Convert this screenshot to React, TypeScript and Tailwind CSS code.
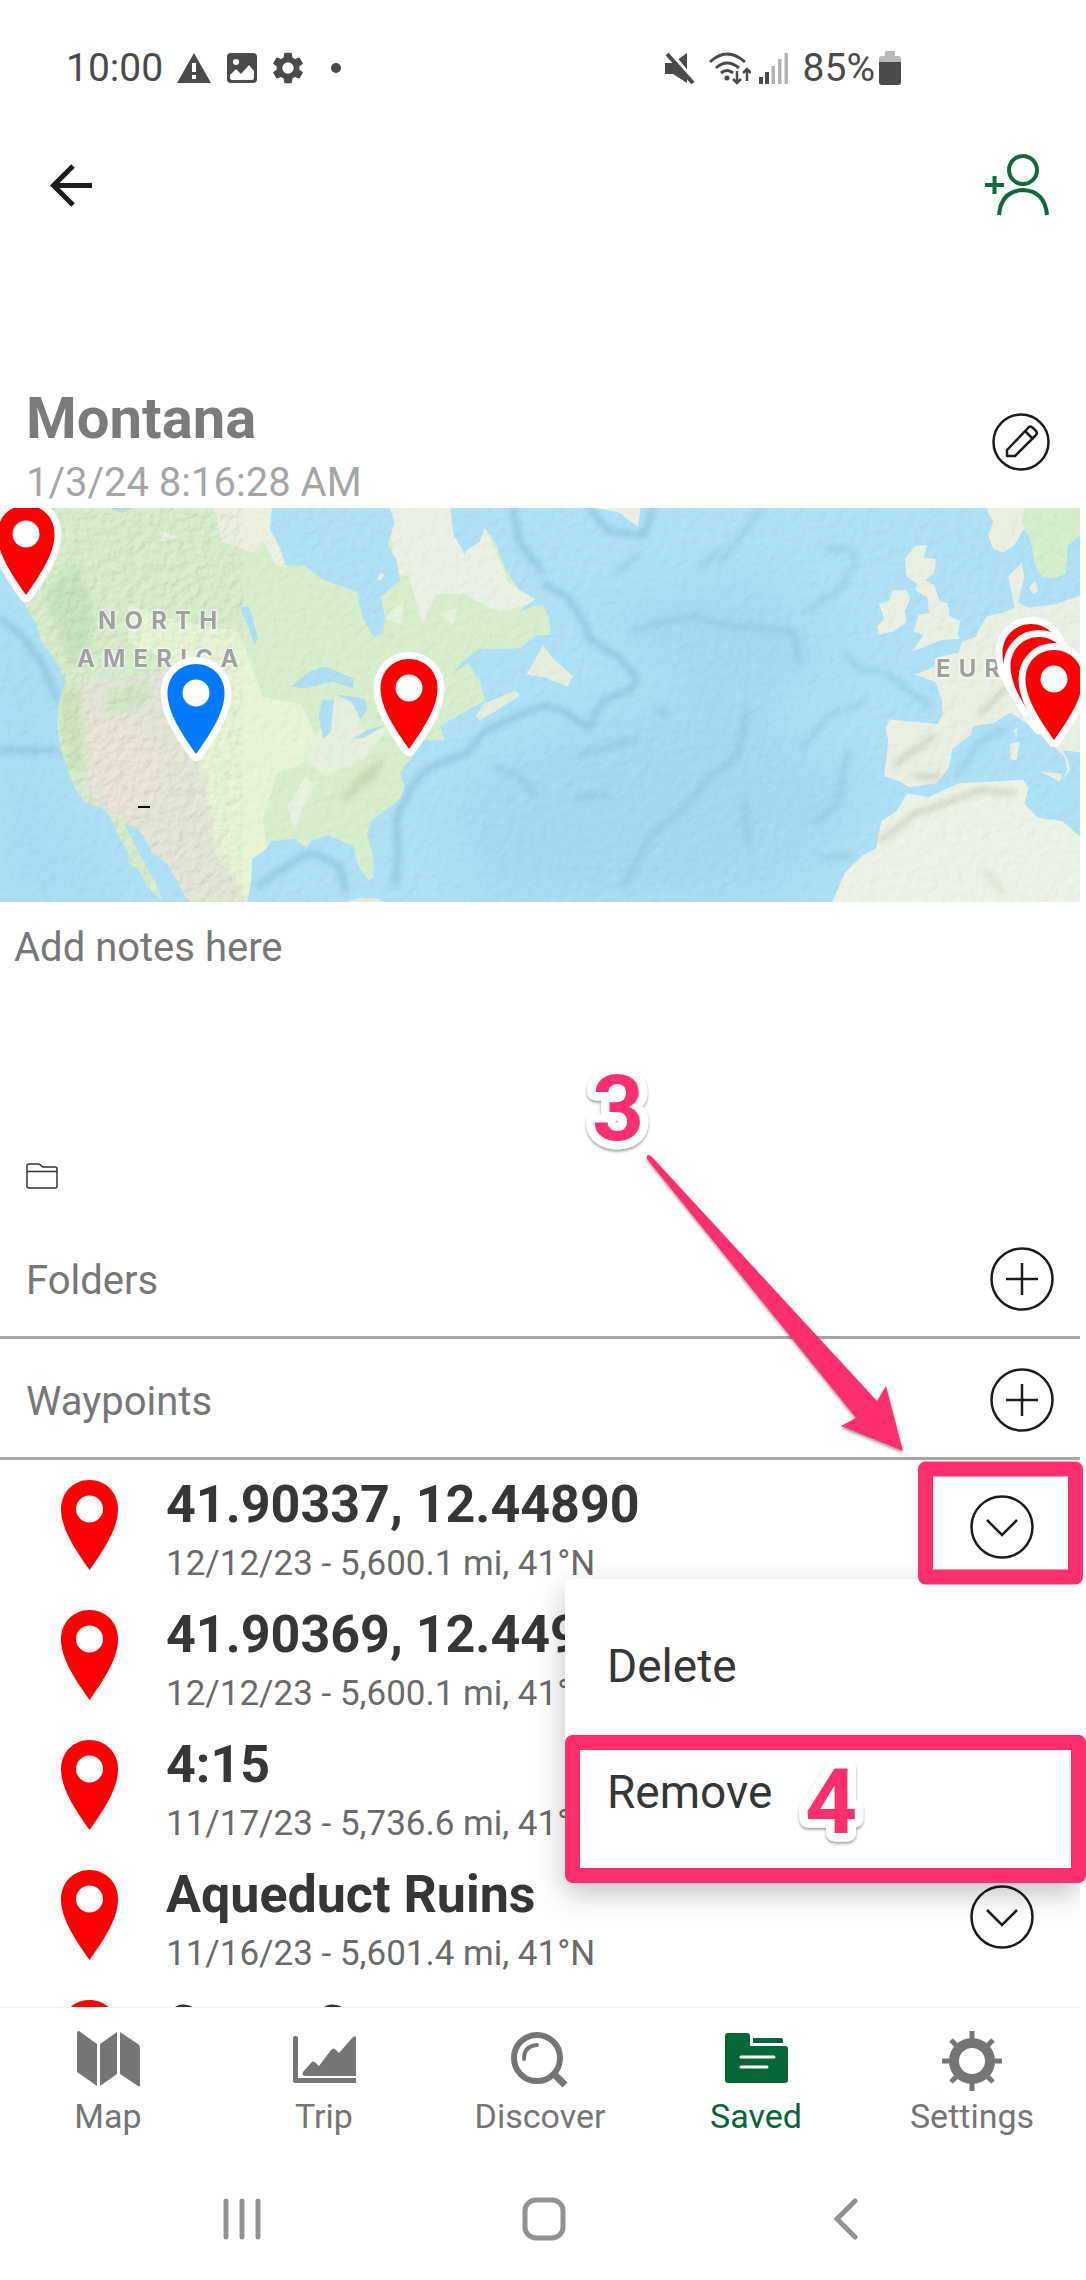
import { useState } from 'react'
import type { ReactNode } from 'react'

interface Waypoint {
  name: string
  detail: string
}

interface MapPin {
  x: number
  y: number
  color: string
}

const waypoints: Waypoint[] = [
  { name: '41.90337, 12.44890', detail: '12/12/23 - 5,600.1 mi, 41°N' },
  { name: '41.90369, 12.44921', detail: '12/12/23 - 5,600.1 mi, 41°N' },
  { name: '4:15', detail: '11/17/23 - 5,736.6 mi, 41°N' },
  { name: 'Aqueduct Ruins', detail: '11/16/23 - 5,601.4 mi, 41°N' },
  { name: 'Camp C', detail: '' },
]

// x and y are the tip of the pin on a 1080 x 394 map
const mapPins: MapPin[] = [
  { x: 26, y: 87, color: '#ff0000' },
  { x: 196, y: 246, color: '#007aff' },
  { x: 409, y: 241, color: '#ff0000' },
  { x: 1031, y: 206, color: '#ff0000' },
  { x: 1039, y: 219, color: '#ff0000' },
  { x: 1054, y: 232, color: '#ff0000' },
]

const PIN_PATH = 'M28.500 0C12.500 0 0 12.500 0 29c0 17 10 35 28.500 61C47 64 57 46 57 29 57 12.500 44.500 0 28.500 0Z'

function Pin({ color = '#ff0000', halo = false }: { color?: string; halo?: boolean }) {
  return (
    <svg viewBox="0 0 57 90" className="h-[90px] w-[57px] shrink-0 overflow-visible" aria-hidden="true">
      {halo && <path d={PIN_PATH} fill="#fff" stroke="#fff" strokeWidth="14" strokeLinejoin="round" />}
      <path d={PIN_PATH} fill={color} />
      <circle cx="28.5" cy="29" r="13.5" fill="#fff" />
    </svg>
  )
}

function StatusBar() {
  return (
    <div className="flex h-[136px] shrink-0 items-center pl-[66px] text-[39px] text-[#4a4a4a]">
      <span>10:00</span>
      <svg viewBox="0 0 34 30" className="ml-3.5 h-[30px] w-[34px]">
        <path d="M17 0 34 30H0Z" fill="#4a4a4a" />
        <path d="M15 10h4v9h-4zM15 22h4v4h-4z" fill="#fff" />
      </svg>
      <svg viewBox="0 0 30 30" className="ml-4 h-[30px] w-[30px]">
        <rect width="30" height="30" rx="4" fill="#4a4a4a" />
        <circle cx="9" cy="9" r="3" fill="#fff" />
        <path d="M3 22 9 16l5 5 8-9 5 6v7q0 2-2 2H5q-2 0-2-2Z" fill="#fff" />
      </svg>
      <svg viewBox="0 0 24 24" className="ml-3 h-[38px] w-[38px]" fill="#4a4a4a">
        <path d="M19.140 12.940c.040-.3.060-.61.060-.94s-.02-.64-.07-.94l2.030-1.580a.49.49 0 0 0 .12-.61l-1.920-3.320a.49.49 0 0 0-.59-.22l-2.390.960a7 7 0 0 0-1.620-.94l-.36-2.540a.48.48 0 0 0-.48-.41h-3.840a.48.48 0 0 0-.47.41l-.36 2.540a7 7 0 0 0-1.620.940l-2.390-.96a.48.48 0 0 0-.59.22L2.740 8.870a.48.48 0 0 0 .12.61l2.030 1.580a6 6 0 0 0 0 1.880l-2.030 1.580a.49.49 0 0 0-.12.61l1.920 3.320c.12.220.370.290.590.220l2.390-.96c.5.380 1.030.7 1.620.940l.36 2.540c.05.240.240.410.480.410h3.840c.24 0 .44-.17.47-.41l.36-2.540a7 7 0 0 0 1.620-.94l2.390.960c.22.080.470 0 .59-.22l1.920-3.320a.48.48 0 0 0-.12-.61ZM12 15.600a3.600 3.600 0 1 1 0-7.200 3.600 3.600 0 0 1 0 7.200Z" />
      </svg>
      <span className="ml-6 h-[10px] w-[10px] rounded-full bg-[#4a4a4a]" />
      <svg viewBox="0 0 30 32" className="ml-auto h-8 w-[30px]">
        <path d="M0 11h8L22 1v30L8 22H0Z" fill="#4a4a4a" />
        <path d="M5 0 30 30" stroke="#fff" strokeWidth="4" />
        <path d="M2 2 28 31" stroke="#4a4a4a" strokeWidth="4" />
      </svg>
      <svg viewBox="0 0 42 34" className="ml-3.5 h-[34px] w-[42px]" fill="none" stroke="#4a4a4a" strokeWidth="3">
        <path d="M1 11Q18-5 36 11M7 17Q18 7 30 17M12 22q6-5 12 0" />
        <circle cx="18" cy="27" r="2.500" fill="#4a4a4a" stroke="none" />
        <path d="M28 20v12m-4-4 4 4 4-4M38 30V18m-4 4 4-4 4 4" strokeWidth="2.500" />
      </svg>
      <svg viewBox="0 0 30 32" className="ml-2 h-8 w-[30px]">
        <path d="M0 25h4v7H0zM6 20h4v12H6z" fill="#4a4a4a" />
        <path d="M12.500 14h3.500v18h-3.500zM19 7h3.500v25H19zM25.500 1H29v31h-3.500z" fill="#b3b3b3" />
      </svg>
      <span className="ml-[14px]">85%</span>
      <svg viewBox="0 0 22 34" className="mr-[179px] ml-1 h-[34px] w-[22px]">
        <path d="M6 0h10v5h3q3 0 3 3v5H0V8q0-3 3-3h3Z" fill="#b9b9b9" />
        <path d="M0 11h22v20q0 3-3 3H3q-3 0-3-3Z" fill="#4a4a4a" />
      </svg>
    </div>
  )
}

function OverviewMap() {
  return (
    <div className="relative h-[394px] shrink-0 overflow-hidden bg-[#b0e2f8]">
      <svg viewBox="0 401 3119 1144" preserveAspectRatio="none" className="h-full w-full" aria-hidden="true">
        <defs>
          <filter id="relief" x="0" y="0" width="100%" height="100%">
            <feTurbulence type="fractalNoise" baseFrequency="0.04" numOctaves="5" seed="8" />
            <feDiffuseLighting surfaceScale="6" lightingColor="#fff">
              <feDistantLight azimuth="225" elevation="60" />
            </feDiffuseLighting>
          </filter>
          <filter id="soft">
            <feGaussianBlur stdDeviation="9" />
          </filter>
          <filter id="softer">
            <feGaussianBlur stdDeviation="60" />
          </filter>
          <path
            id="america"
            d="M0 401 0 520 50 620 75 690 105 740 120 790 165 850 190 905 172 960 165 1020 172 1090 190 1140 200 1175 215 1215 245 1255 295 1272 320 1300 340 1350 375 1410 365 1430 400 1450 425 1500 470 1545 450 1490 410 1420 375 1350 358 1318 385 1322 415 1355 440 1400 480 1430 510 1480 535 1530 550 1545H715L725 1480 727 1420 770 1390 785 1368 850 1362 885 1388 900 1365 950 1352 990 1370 1020 1380 1035 1440 1062 1480 1078 1475 1080 1420 1060 1350 1070 1310 1110 1280 1155 1245 1168 1210 1155 1170 1185 1130 1225 1075 1285 1075 1270 1035 1330 1000 1400 960 1385 900 1350 850 1300 890 1290 910 1330 850 1380 812 1500 808 1550 770 1590 770 1585 720 1568 680 1500 700 1545 665 1500 640 1460 580 1430 500 1400 460 1385 500 1340 530 1310 480 1300 401H1125L1140 440 1120 510 1145 550 1155 610 1100 660 1112 720 1105 765 1078 775 1045 715 1032 645 930 608 880 568 825 568 805 510 778 460 785 401Z"
          />
          <path
            id="europe"
            d="M3119 655 3050 680 2970 690 2940 675 2958 600 2950 560 2912 600 2930 690 2898 705 2850 715 2828 750 2818 775 2778 790 2768 820 2700 838 2698 862 2643 885 2700 905 2720 955 2722 1000 2708 1028 2570 1015 2558 1040 2565 1080 2553 1180 2600 1195 2625 1212 2705 1200 2740 1155 2750 1100 2803 1060 2810 1035 2870 1025 2918 995 2970 1030 3040 1090 3075 1125 3083 1160 3070 1190 3090 1160 3083 1130 3070 1105 3119 1110Z"
          />
          <path
            id="africa"
            d="M2403 1545 2440 1460 2490 1410 2530 1390 2545 1310 2590 1280 2620 1230 2680 1240 2770 1200 2870 1195 2955 1190 2970 1215 2958 1260 2998 1300 3068 1310 3119 1355V1545Z"
          />
          <clipPath id="land">
            <use href="#america" />
            <use href="#europe" />
            <use href="#africa" />
          </clipPath>
        </defs>

        {/* Sea floor */}
        <g filter="url(#softer)" fill="#98d1ec" opacity="0.45">
          <path d="M1300 1250 1600 1050 2150 900 2300 1100 2500 1200 2380 1400 2200 1545H1400Z" />
          <path d="M0 720 120 900 130 1200 330 1545H0Z" opacity="0.7" />
          <path d="M1750 700 2200 600 2400 850 2200 980 1900 880Z" />
        </g>
        <g fill="none" stroke="#78acc9" strokeWidth="9" strokeLinejoin="round" filter="url(#soft)" opacity="0.85">
          <path d="M1140 1500 1150 1400 1145 1300 1190 1210 1230 1160 1350 1110 1400 1050 1480 1010 1568 975 1620 985 1700 1040 1740 960 1830 920 1838 890 1780 830 1700 780 1690 740 1640 660 1568 620" />
          <path d="M740 1500 860 1420 900 1400 980 1440 1000 1520" />
          <path d="M0 720 70 780 130 870 165 960M0 1105H165" />
          <path d="M1480 401 1500 500 1568 590" />
          <path d="M1700 401 1760 470 1860 480 1885 401" />
        </g>
        <g fill="none" stroke="#7db2ce" strokeWidth="7" strokeLinejoin="round" filter="url(#soft)" opacity="0.75">
          <path d="M1820 760 1900 735 2010 715 2080 740 2200 750 2290 760 2310 860" />
          <path d="M2160 980 2130 1120 2050 1180 1980 1270 1880 1350 1800 1500" />
          <path d="M2330 700 2420 640 2470 560 2460 520 2380 520M2440 820 2480 870 2560 880 2690 980" />
          <path d="M1780 590 1850 530M2080 560 2200 401M2020 580 2080 520" />
          <path d="M2310 1100 2400 1000 2500 960M2450 1100 2420 1260 2350 1320M2150 1240 2160 1380M2370 1420 2460 1410" />
          <path d="M1660 1240 1760 1235M1890 980 1930 1000M1840 1070 1670 1120" />
          <path d="M2760 1180 2830 1080 2900 1040" />
          <path d="M1420 1150 1500 1180 1550 1240" />
        </g>

        {/* North America */}
        <use href="#america" fill="#d8f0cd" />
        <g clipPath="url(#land)">
          <path d="M620 401 640 500 730 530 760 500 800 570 830 570 785 401Z" fill="#edf2e2" />
          <path d="M1120 401H1310L1340 540 1400 455 1470 620 1560 670 1440 705 1340 650 1260 650 1220 740 1180 600 1140 590Z" fill="#ecf2e6" />
          <path d="M370 680 480 720 690 760 760 950 870 970 930 1100 860 1150 800 1170 760 1300 770 1400 710 1545 620 1400 560 1180 650 960 480 840 370 790Z" fill="#eaf6d8" />
          <path d="M960 960 1010 950 1060 1060 1130 1030 1050 1130 940 1180 880 1130Z" fill="#e6f1de" />
          <path d="M880 1180 910 1200 850 1330 830 1270ZM1110 720 1165 670 1160 740ZM1270 710 1320 690 1310 740ZM460 500 475 470 520 485Z" fill="#e8f3e0" />
          <g filter="url(#soft)">
            <path d="M130 640 230 560 270 700 260 860 200 860Z" fill="#cbe6c1" />
            <path d="M230 900 480 880 590 1180 620 1400 720 1545H540L370 1320 250 1240Z" fill="#e6e8d9" />
            <path d="M250 1020 380 1020 480 1130 460 1240 330 1300 260 1150Z" fill="#ece7d9" />
            <path d="M170 920H230L240 1160 200 1170Z" fill="#cfe8be" />
            <path d="M330 930 430 900 420 980 300 1000Z" fill="#d3e9c5" />
            <path d="M980 1240 1080 1140 1110 1130 1090 1180 1000 1250Z" fill="#c4ddb6" />
          </g>
        </g>
        <g fill="#b0e0f5">
          <path d="M840 920 895 875 940 862 1020 895 1020 925 960 905 880 925ZM930 960 965 958 955 1050 935 1072 920 1010ZM970 942 1055 955 1060 985 1040 1015 1030 990 1015 965ZM1018 1072 1060 1045 1110 1032 1050 1068ZM1085 1010 1130 990 1120 1010ZM693 690 718 685 745 780 735 798 718 750Z" />
          <path d="M320 401H385L350 415Z" />
        </g>
        <path d="M1520 885 1568 800 1600 840 1655 890 1640 920 1568 892ZM1375 1005 1395 970 1490 930 1500 945 1440 985 1385 1018ZM1000 1545 1040 1532 1090 1535 1110 1545ZM1090 605 1100 588 1110 595 1098 612Z" fill="#e6f0de" />

        {/* Europe and Africa */}
        <g fill="#ebf2e4">
          <use href="#europe" />
          <use href="#africa" fill="#edf5e8" />
          <path d="M2643 510 2678 510 2668 545 2703 550 2698 590 2673 610 2698 625 2713 670 2738 680 2743 715 2773 730 2765 765 2773 780 2718 785 2678 800 2633 818 2668 770 2638 760 2653 710 2683 705 2678 660 2643 640 2648 620 2618 600 2613 550ZM2578 640 2618 640 2628 665 2613 700 2618 735 2578 760 2538 770 2533 745 2553 720 2538 680 2568 670Z" />
          <path d="M2848 401 2868 440 2853 480 2868 520 2898 530 2928 510 2958 460 2978 500 2988 560 3008 600 3048 605 3078 590 3083 510 3119 480V401Z" />
          <path d="M2970 630 2990 612 2998 640 2985 652ZM3003 1165 3068 1172 3060 1195ZM2918 1085 2945 1080 2935 1135 2918 1130ZM2928 1045 2938 1040 2935 1070ZM1718 401H1850L1843 455 1820 440 1790 415Z" />
        </g>
        <path d="M2958 401 2950 440 2978 500 2988 560 3008 600 3048 605 3078 590 3083 510 3119 480V401Z" fill="#d6efcc" />
        <g fill="none" stroke="#c3c4b5" strokeWidth="10" filter="url(#soft)">
          <path d="M2540 1370 2640 1290 2720 1260 2830 1220 2930 1230M2580 1150 2700 1060M2640 1180 2720 1180M2830 1000 2910 920" />
          <path d="M2840 1450 2900 1520" opacity="0.5" />
        </g>

        {/* Hill shading */}
        <rect y="401" width="3119" height="1144" filter="url(#relief)" className="opacity-15 mix-blend-multiply" />
        <g clipPath="url(#land)" className="mix-blend-multiply">
          <path d="M0 401H330L300 760 480 880 560 1100 700 1545H360L160 1200 90 750Z" filter="url(#relief)" opacity="0.2" />
        </g>
      </svg>

      <p className="absolute top-[94px] left-[77px] text-center font-[Inter] text-2xl leading-[38px] font-bold tracking-[0.34em] text-[#a3a0a0] [text-shadow:0_0_3px_#fff,0_0_3px_#fff]">
        NORTH
        <br />
        AMERICA
      </p>
      <p className="absolute top-[142px] left-[936px] font-[Inter] text-2xl leading-[38px] font-bold tracking-[0.34em] text-[#a3a0a0] [text-shadow:0_0_3px_#fff,0_0_3px_#fff]">
        EUROPE
      </p>
      <span className="absolute top-[298px] left-[138px] h-0.5 w-3 bg-black" />

      {mapPins.map((pin, i) => (
        <span
          key={i}
          className="absolute -translate-x-1/2 -translate-y-full"
          style={{ left: `${(pin.x / 1080) * 100}%`, top: pin.y }}
        >
          <Pin color={pin.color} halo />
        </span>
      ))}
    </div>
  )
}

function SectionHeader({ title }: { title: string }) {
  return (
    <div className="flex h-[121px] shrink-0 items-center justify-between border-b-3 border-[#a5a5a5] px-[26px] pt-[3px]">
      <h2 className="pt-1 text-[40px] text-[#777]">{title}</h2>
      <button aria-label={`Add to ${title}`}>
        <svg viewBox="0 0 64 64" className="h-16 w-16" fill="none" stroke="#1c1c1c" strokeWidth="2.500">
          <circle cx="32" cy="32" r="30.500" />
          <path d="M32 16v32M16 32h32" />
        </svg>
      </button>
    </div>
  )
}

function WaypointRow({ waypoint, onToggle }: { waypoint: Waypoint; onToggle: () => void }) {
  return (
    <li className="flex h-[130px] shrink-0 pr-[46px] pl-[61px]">
      <div className="pt-5">
        <Pin />
      </div>
      <div className="ml-12 flex-1 pt-[13px]">
        <h3 className="text-[52px] leading-[64px] font-bold text-[#363636]">{waypoint.name}</h3>
        <p className="mt-2 text-[35px] leading-[38px] text-[#6a6a6a]">{waypoint.detail}</p>
      </div>
      <button onClick={onToggle} aria-label={`Options for ${waypoint.name}`} className="pt-[3px]">
        <svg viewBox="0 0 64 64" className="h-16 w-16" fill="none" stroke="#1c1c1c" strokeWidth="2.500">
          <circle cx="32" cy="32" r="30.500" />
          <path d="m17 25 15 15 15-15" />
        </svg>
      </button>
    </li>
  )
}

const tabs: { label: string; active?: boolean; icon: ReactNode }[] = [
  {
    label: 'Map',
    icon: (
      <path d="M2 0 20 13V55L0 41V2Q0 0 2 0ZM23 13 40 1V43L23 55ZM43 1 61 13Q63 14 63 17V54Q63 56 61 55L43 43Z" />
    ),
  },
  {
    label: 'Trip',
    icon: (
      <>
        <path d="M0 7q0-2 2-2h1q2 0 2 2v40h58v5H2q-2 0-2-2Z" />
        <path d="M10 41 18 32q2-3 5 0l3 3L38 19q2-3 5 0l3 3L60 6q3-2 3 1v38H13q-5 0-3-4Z" />
      </>
    ),
  },
  {
    label: 'Discover',
    icon: (
      <>
        <circle cx="28" cy="27" r="23" fill="none" stroke="currentColor" strokeWidth="6" />
        <path d="M15 28q0-13 13-14" fill="none" stroke="currentColor" strokeWidth="4" strokeLinecap="round" />
        <path d="m43 41 13 13" stroke="currentColor" strokeWidth="7" />
      </>
    ),
  },
  {
    label: 'Saved',
    active: true,
    icon: (
      <>
        <path d="M3 2h19q3 0 3 3v10h35q3 0 3 3v31q0 3-3 3H3q-3 0-3-3V5q0-3 3-3Z" />
        <path d="M28 7h28q2 0 2 2v3H28Z" />
        <path d="M16 26h33M16 36h26" stroke="#fff" strokeWidth="3" strokeLinecap="round" />
      </>
    ),
  },
  {
    label: 'Settings',
    icon: (
      <g fill="none" stroke="currentColor">
        <circle cx="31" cy="30" r="18" strokeWidth="10" />
        <path d="M31 0v12M31 48v12M1 30h12M49 30h12M10 9l8 8M44 43l8 8M10 51l8-8M44 17l8-8" strokeWidth="5" />
      </g>
    ),
  },
]

function TabBar() {
  return (
    <nav className="grid h-[151px] shrink-0 grid-cols-5 border-t border-[#f0f0f0] bg-white">
      {tabs.map((tab) => (
        <a
          key={tab.label}
          href="#"
          className={`flex flex-col items-center pt-[23px] ${tab.active ? 'text-[#056735]' : 'text-[#757575]'}`}
        >
          <svg viewBox="0 0 63 63" className="h-[63px] w-[63px]" fill="currentColor" aria-hidden="true">
            {tab.icon}
          </svg>
          <span className="mt-0.5 text-[34px] leading-10">{tab.label}</span>
        </a>
      ))}
    </nav>
  )
}

function SystemNav() {
  return (
    <div className="grid h-[122px] shrink-0 grid-cols-3 place-items-center bg-white pr-[83px] pl-[91px] text-[#929292]">
      <button aria-label="Recent apps">
        <svg viewBox="0 0 38 42" className="h-[42px] w-[38px]" stroke="currentColor" strokeWidth="5" strokeLinecap="round">
          <path d="M3 3v36M19 3v36M35 3v36" />
        </svg>
      </button>
      <button aria-label="Home">
        <svg viewBox="0 0 44 44" className="h-11 w-11" fill="none" stroke="currentColor" strokeWidth="5">
          <rect x="3" y="3" width="38" height="38" rx="11" />
        </svg>
      </button>
      <button aria-label="Back">
        <svg viewBox="0 0 24 42" className="h-[42px] w-6" fill="none" stroke="currentColor" strokeWidth="5" strokeLinecap="round">
          <path d="M21 3 3 21l18 18" />
        </svg>
      </button>
    </div>
  )
}

// Tutorial callouts drawn on top of the screen
function Callouts() {
  return (
    <svg
      viewBox="0 0 1086 2280"
      className="pointer-events-none absolute top-0 right-0 h-[2280px] w-[1086px] font-[Roboto]"
      fill="#ff2f6e"
    >
      <defs>
        <filter id="drop" x="-50%" y="-50%" width="200%" height="200%">
          <feDropShadow dx="0" dy="2" stdDeviation="1.500" floodOpacity="0.4" />
        </filter>
      </defs>
      <g fill="none" stroke="#ff2f6e" strokeWidth="15" strokeLinejoin="round">
        <rect x="925.500" y="1469" width="150" height="108" />
        <rect x="572.500" y="1742.500" width="506" height="133" />
      </g>
      <path d="M652 1157 877 1401 886 1386 903 1451 841 1426 856 1418 647 1159Q646 1152 652 1157Z" filter="url(#drop)" />
      <g
        fontSize="91"
        fontWeight="700"
        stroke="#fff"
        strokeWidth="17"
        strokeLinejoin="round"
        paintOrder="stroke"
        textAnchor="middle"
        filter="url(#drop)"
      >
        <text x="618" y="1140">3</text>
        <text x="831" y="1833">4</text>
      </g>
    </svg>
  )
}

export default function App() {
  const [menuOpen, setMenuOpen] = useState(true)
  const [notes, setNotes] = useState('')

  return (
    <div className="relative flex h-screen flex-col overflow-hidden bg-white pr-1.5 font-[Roboto,sans-serif]">
      <StatusBar />

      {/* Header */}
      <header className="flex h-[98px] shrink-0 items-center justify-between pr-[31px] pl-[50px]">
        <button aria-label="Back to saved">
          <svg viewBox="0 0 43 43" className="h-[43px] w-[43px]" fill="none" stroke="#1c1c1c" strokeWidth="5">
            <path d="M42 21.500H4M23 2 3.500 21.500 23 41" />
          </svg>
        </button>
        <button aria-label="Share with a person">
          <svg viewBox="0 0 64 62" className="h-[62px] w-16" fill="none" stroke="#0b6b3a" strokeWidth="4">
            <circle cx="38" cy="16" r="14" />
            <path d="M14 61q2-24 24-25 22 1 24 25M0 31h19M9.500 22v18" />
          </svg>
        </button>
      </header>

      {/* Title */}
      <section className="flex shrink-0 items-center justify-between pt-36 pr-[30px] pl-[26px]">
        <div>
          <h1 className="text-[58px] leading-[80px] font-bold text-[#7b7b7b]">Montana</h1>
          <p className="text-[40px] leading-[50px] text-[#a5a5a5]">1/3/24 8:16:28 AM</p>
        </div>
        <button aria-label="Edit name" className="pb-[3px]">
          <svg viewBox="0 0 58 58" className="h-[58px] w-[58px]" fill="none" stroke="#1c1c1c" strokeWidth="2.500">
            <circle cx="29" cy="29" r="27.500" />
            <path d="M15 37 36 15q2-3 5 0l3 3q2 3-1 5L23 43h-8ZM33 18l8 8" strokeLinejoin="round" />
          </svg>
        </button>
      </section>

      <OverviewMap />

      <textarea
        value={notes}
        onChange={(e) => setNotes(e.target.value)}
        placeholder="Add notes here"
        aria-label="Notes"
        className="block h-[232px] w-full shrink-0 resize-none px-3.5 pt-5 text-[40px] leading-[52px] text-[#777] outline-none placeholder:text-[#777]"
      />

      <div className="flex h-[84px] shrink-0 items-center pl-[26px]">
        <svg viewBox="0 0 32 26" className="h-[26px] w-8" fill="none" stroke="#333" strokeWidth="1.500">
          <path d="M1 24V3q0-2 2-2h9q2 0 3 1.500T18 4h11q2 0 2 2v17q0 2-2 2H3q-2 0-2-2ZM1 8.500h30" />
        </svg>
      </div>

      <SectionHeader title="Folders" />
      <SectionHeader title="Waypoints" />

      {/* Waypoint list */}
      <div className="relative min-h-0 flex-1 overflow-hidden">
        <ul className="flex flex-col">
          {waypoints.map((waypoint) => (
            <WaypointRow key={waypoint.name} waypoint={waypoint} onToggle={() => setMenuOpen(!menuOpen)} />
          ))}
        </ul>
        {menuOpen && (
          <div className="absolute top-[119px] right-0 flex h-[302px] w-[515px] flex-col rounded-lg bg-white pt-6 text-[46px] text-[#363636] shadow-[0_12px_30px_rgba(0,0,0,0.25)]">
            <button className="h-[126px] pl-[42px] text-left">Delete</button>
            <button className="h-[126px] pl-[42px] text-left">Remove</button>
          </div>
        )}
      </div>

      <TabBar />
      <SystemNav />
      <Callouts />
    </div>
  )
}
